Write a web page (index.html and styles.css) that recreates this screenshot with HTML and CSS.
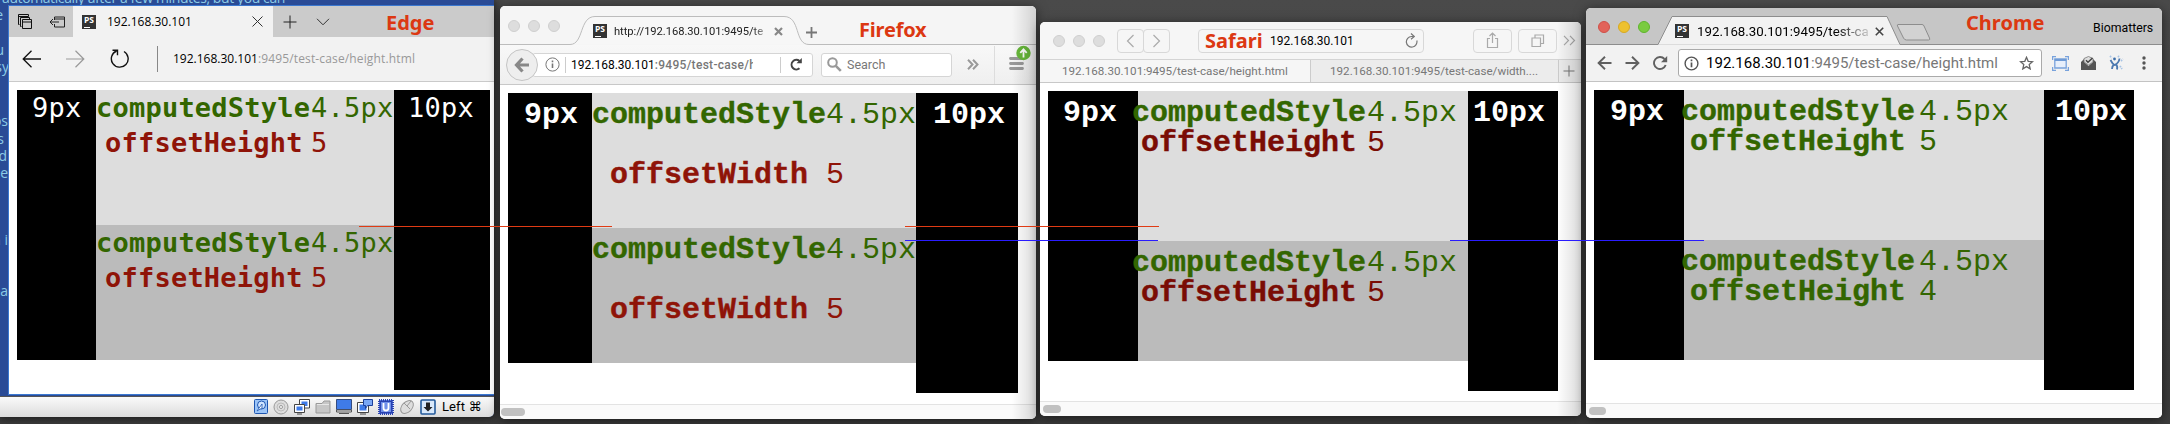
FILE: index.html
```html
<!DOCTYPE html>
<html lang="en">
<head>
<meta charset="utf-8">
<title>Height test case</title>
<link rel="stylesheet" href="styles.css">
</head>
<body>
<main class="desktop">

<section class="vm">
  <div class="wall">
    <span class="wall-top">automatically after a few minutes, but you can</span>
    <span class="frag f1">e</span><span class="frag f2">u</span><span class="frag f3">sy</span><span class="frag f4">os</span><span class="frag f5">s</span><span class="frag f6">d</span><span class="frag f7">e</span><span class="frag f8">n i</span><span class="frag f9">-a</span>
  </div>
  <div class="edge">
    <div class="edge-tabs">
      <div class="edge-left">
        <svg class="e-stack" width="16" height="16" viewBox="0 0 16 16" fill="none" stroke="#111"><path d="M1.5 10.5h-1v-10h10v2M.5 2.5h10M3.500 12.500h-1v-9h9v1.500"/><path d="M4.500 5.500h9v9h-9zM4.500 8h9"/></svg>
        <svg class="e-aside" width="17" height="12" viewBox="0 0 17 12" fill="none" stroke="#222"><path d="M5.500 4V1h10v10h-10V8M5.500 3h10M1 6h9M4 3 1 6l3 3"/></svg>
      </div>
      <div class="edge-tab">
        <span class="fav">PS</span><span class="edge-title">192.168.30.101</span>
        <svg class="e-x" width="11" height="11" viewBox="0 0 11 11" stroke="#333"><path d="M.5.5l10 10M10.500.5l-10 10"/></svg>
      </div>
      <svg class="e-plus" width="14" height="14" viewBox="0 0 14 14" stroke="#222"><path d="M7 .5v13M.5 7h13"/></svg>
      <svg class="e-chev" width="14" height="8" viewBox="0 0 14 8" fill="none" stroke="#333"><path d="M1 .8l6 6 6-6"/></svg>
      <span class="label l-edge">Edge</span>
    </div>
    <div class="edge-bar">
      <svg width="20" height="18" viewBox="0 0 20 18" fill="none" stroke="#111" stroke-width="1.300"><path d="M19 9H1M9.500.8 1.200 9l8.300 8.200"/></svg>
      <svg class="e-fwd" width="20" height="18" viewBox="0 0 20 18" fill="none" stroke="#999" stroke-width="1.200"><path d="M1 9h18M10.500.8 18.800 9l-8.300 8.200"/></svg>
      <svg class="e-rel" width="20" height="20" viewBox="0 0 20 20" fill="none" stroke="#111" stroke-width="1.400"><path d="M14 2.500A8.400 8.400 0 1 1 6.500 2M2.500 1.200h5v5"/></svg>
      <i class="e-sep"></i>
      <span class="e-url">192.168.30.101<em>:9495/test-case/height.html</em></span>
    </div>
    <div class="board b-edge">
      <div class="side s9">9px</div>
      <div class="mid">
        <div class="cell light"><p class="g"><b>computedStyle</b><span>4.5px</span></p><p class="r in"><b>offsetHeight</b><span>5</span></p></div>
        <div class="cell dark"><p class="g"><b>computedStyle</b><span>4.5px</span></p><p class="r in"><b>offsetHeight</b><span>5</span></p></div>
      </div>
      <div class="side s10">10px</div>
    </div>
  </div>
  <div class="status">
    <svg width="14" height="16" viewBox="0 0 14 16"><rect x=".5" y=".5" width="13" height="14" rx="1" fill="#9bc4f7" stroke="#1d55b0"/><circle cx="7.500" cy="6" r="4" fill="#cfe4ff" stroke="#1d55b0"/><path d="M8 5l-5 7 5-3z" fill="#fff" stroke="#1d55b0" stroke-width=".8"/></svg>
    <svg width="16" height="16" viewBox="0 0 16 16" fill="#ddd" stroke="#999"><circle cx="8" cy="8" r="7"/><circle cx="8" cy="8" r="4" stroke="#bbb"/><circle cx="8" cy="8" r="1.500" fill="#fff"/></svg>
    <svg width="16" height="16" viewBox="0 0 16 16" fill="#3f7be8" stroke="#444"><path d="M5.500.500h10v8.500h-10z" fill="#fff"/><path d="M7.500 2.500h6v4.500h-6z" stroke="none"/><path d="M.5 5.500H10.500v8H.5z" fill="#fff"/><path d="M2.500 7.500h6v4h-6z" stroke="none"/><path d="M3 15h5"/></svg>
    <svg width="16" height="16" viewBox="0 0 16 16" fill="#c6c6c6" stroke="#999"><path d="M1 14V4.500h6l2-2.500h6V14z"/><path d="M2 5.500h12" stroke="#e6e6e6"/></svg>
    <svg width="16" height="16" viewBox="0 0 16 16"><path d="M.5.5h15v10H.5z" fill="#3f7be8" stroke="#334b80"/><path d="M.5 11h15v2H.5zM3 14.500h10" fill="#eee" stroke="#555"/></svg>
    <svg width="16" height="16" viewBox="0 0 16 16"><path d="M.5 3.500h11v10H.5z" fill="#fff" stroke="#444"/><path d="M2.500 5.500h7v6h-7z" fill="#3f7be8"/><path d="M3 15h6" stroke="#444"/><path d="M6.500.5h9v6h-5l-2 3v-3h-2z" fill="#79a7f5" stroke="#1b3f9c"/></svg>
    <svg width="16" height="16" viewBox="0 0 16 16"><rect x="1" y="1" width="14" height="14" fill="#5878dc" stroke="#2a42b0" stroke-width="2" stroke-dasharray="1 1"/><rect x="2.500" y="2.500" width="11" height="11" fill="#7090ea" stroke="#2a42b0"/><path d="M5.500 4v5q0 2.500 2.500 2.500T10.500 9V4" fill="none" stroke="#fff" stroke-width="1.800"/></svg>
    <svg width="16" height="16" viewBox="0 0 16 16" fill="#ddd" stroke="#999"><ellipse cx="8" cy="8" rx="5" ry="7.500" transform="rotate(45 8 8)"/><path d="M5 4l6 6M8 7l4-5" fill="none"/></svg>
    <svg width="16" height="16" viewBox="0 0 16 16"><rect x="1" y="1" width="14" height="14" rx="1" fill="#d9e9fb" stroke="#235a9c" stroke-width="1.600"/><path d="M6 3.500h4V8h2.500L8 12.500 3.500 8H6z" fill="#222"/></svg>
    <span class="host">Left ⌘</span>
  </div>
</section>

<section class="win firefox">
  <div class="ff-tabs">
    <svg class="ff-shape" width="536" height="39" viewBox="0 0 536 39"><path d="M0 38.500H70C84 38.500 79 10.500 95 10.500H284C301 10.500 294 38.500 309 38.500H536" fill="#f7f7f7" stroke="#bcbcbc"/></svg>
    <span class="dots"><i></i><i></i><i></i></span>
    <span class="fav">PS</span><span class="ff-title">http://192.168.30.101:9495/te</span>
    <svg class="ff-x" width="9" height="9" viewBox="0 0 9 9" stroke="#888" stroke-width="2.200"><path d="M1 1l7 7M8 1 1 8"/></svg>
    <svg class="ff-plus" width="11" height="11" viewBox="0 0 11 11" stroke="#777" stroke-width="1.800"><path d="M5.500 0v11M0 5.500h11"/></svg>
    <span class="label l-ff">Firefox</span>
  </div>
  <div class="ff-bar">
    <span class="ff-back"><svg width="16" height="16" viewBox="0 0 16 16" fill="none" stroke="#888" stroke-width="3.200"><path d="M15 8H3M8.500 1.500 2.500 8l6 6.500"/></svg></span>
    <div class="ff-url">
      <svg width="15" height="15" viewBox="0 0 15 15" fill="none" stroke="#777"><circle cx="7.500" cy="7.500" r="6.600"/><path d="M7.500 6.500V11M7.500 3.600v1.600" stroke-width="1.600"/></svg>
      <i class="v"></i><span class="u">192.168.30.101<em>:9495/test-case/height.html</em></span><i class="v"></i>
      <svg class="ff-rel" width="13" height="13" viewBox="0 0 13 13" fill="none" stroke="#444" stroke-width="2"><path d="M9.500 10.300A4.800 4.800 0 1 1 9.500 3"/><path d="M6.500 5.200h5.300V0z" fill="#444" stroke="none"/></svg>
    </div>
    <div class="ff-search"><svg width="15" height="15" viewBox="0 0 15 15" fill="none" stroke="#999" stroke-width="2"><circle cx="5.500" cy="5.500" r="4.300"/><path d="M8.800 8.800l5 5" stroke-width="2.600"/></svg>Search</div>
    <svg class="ff-more" width="12" height="11" viewBox="0 0 12 11" fill="none" stroke="#999" stroke-width="2"><path d="M1 .8l4.500 4.700L1 10.200M6 .8l4.500 4.700L6 10.200"/></svg>
    <i class="ff-v"></i>
    <svg class="ff-menu" width="24" height="26" viewBox="0 0 24 26"><path d="M2.500 13.500h12M2.500 18.500h12M2.500 23.500h12" stroke="#999" stroke-width="2.800" stroke-linecap="round"/><circle cx="15.500" cy="8" r="7.200" fill="#67b83a"/><path d="M15.500 12.500V5M12.300 7.800l3.200-3.500 3.200 3.500" fill="none" stroke="#fff" stroke-width="1.800"/></svg>
  </div>
  <div class="board b-ff">
    <div class="side s9">9px</div>
    <div class="mid">
      <div class="cell light"><p class="g"><b>computedStyle</b><span>4.5px</span></p><p class="r in"><b>offsetWidth</b><span>5</span></p></div>
      <div class="cell dark"><p class="g"><b>computedStyle</b><span>4.5px</span></p><p class="r in"><b>offsetWidth</b><span>5</span></p></div>
    </div>
    <div class="side s10">10px</div>
  </div>
  <div class="scroll"><i></i></div>
  <div class="shade"></div>
</section>

<section class="win safari">
  <div class="sf-bar">
    <span class="dots"><i></i><i></i><i></i></span>
    <span class="sf-nav"><i><svg width="9" height="14" viewBox="0 0 9 14"><path d="M7.500 1 1.500 7l6 6"/></svg></i><i><svg width="9" height="14" viewBox="0 0 9 14"><path d="M1.500 1l6 6-6 6"/></svg></i></span>
    <div class="sf-url"><span class="label l-sf">Safari</span><span class="sf-host">192.168.30.101</span><svg width="13" height="15" viewBox="0 0 13 15" fill="none" stroke="#777" stroke-width="1.200"><path d="M11.800 7.500A5.300 5.300 0 1 1 6.500 3.500h2"/><path d="M6 .5l3.300 3L6 6.300" /></svg></div>
    <span class="sf-btn"><svg width="14" height="17" viewBox="0 0 14 17"><path d="M4 6.500H1.500v9h10v-9H9M6.500 11V1M3.500 4l3-3 3 3"/></svg></span>
    <span class="sf-btn b2"><svg width="14" height="14" viewBox="0 0 14 14"><path d="M1 4h8.500v8.500H1zM4 3.800V1h8.500v8.500H10"/></svg></span>
    <svg class="sf-more" width="13" height="11" viewBox="0 0 13 11"><path d="M1 .8l4.500 4.700L1 10.200M7 .8l4.500 4.700L7 10.200"/></svg>
  </div>
  <div class="sf-tabs"><span class="t1">192.168.30.101:9495/test-case/height.html</span><span class="t2">192.168.30.101:9495/test-case/width....</span><span class="t3"><svg width="12" height="12" viewBox="0 0 12 12" stroke="#777"><path d="M6 .5v11M.5 6h11"/></svg></span></div>
  <div class="board b-sf">
    <div class="side s9">9px</div>
    <div class="mid">
      <div class="cell light"><p class="g"><b>computedStyle</b><span>4.5px</span></p><p class="r in"><b>offsetHeight</b><span>5</span></p></div>
      <div class="cell dark"><p class="g"><b>computedStyle</b><span>4.5px</span></p><p class="r in"><b>offsetHeight</b><span>5</span></p></div>
    </div>
    <div class="side s10">10px</div>
  </div>
  <div class="scroll"><i></i></div>
  <div class="shade"></div>
</section>

<section class="win chrome">
  <div class="ch-tabs">
    <svg class="ff-shape" width="576" height="37" viewBox="0 0 576 37"><path d="M0 36.500H72L86 8.500H301L314 36.500H576" fill="#f2f2f2" stroke="#8d8d8d"/><path d="M312 16.500h24q1.500 0 2 1.500l5.500 12q1 2-1 2h-22q-2 0-3-2l-6-12q-.5-1.500.5-1.500z" fill="#d2d2d2" stroke="#8d8d8d"/></svg>
    <span class="dots"><i></i><i></i><i></i></span>
    <span class="fav">PS</span><span class="ch-title">192.168.30.101:9495/test-ca</span>
    <svg class="ch-x" width="9" height="9" viewBox="0 0 9 9" stroke="#444" stroke-width="1.600"><path d="M.8.8l7.400 7.400M8.200.8.8 8.200"/></svg>
    <span class="label l-ch">Chrome</span><span class="ch-user">Biomatters</span>
  </div>
  <div class="ch-bar">
    <svg class="i1" width="15" height="14" viewBox="0 0 15 14" fill="none" stroke="#606060" stroke-width="1.900"><path d="M14.500 7H2M8 .8 1.600 7 8 13.200"/></svg>
    <svg class="i2" width="15" height="14" viewBox="0 0 15 14" fill="none" stroke="#606060" stroke-width="1.900"><path d="M.5 7H13M7 .8 13.400 7 7 13.200"/></svg>
    <svg class="i3" width="15" height="14" viewBox="0 0 15 14" fill="none" stroke="#606060" stroke-width="1.900"><path d="M12.700 9A6 6 0 1 1 11.500 3"/><path d="M8 6.300h6.200V0z" fill="#606060" stroke="none"/></svg>
    <div class="ch-url">
      <svg width="15" height="15" viewBox="0 0 15 15" fill="none" stroke="#555" stroke-width="1.400"><circle cx="7.500" cy="7.500" r="6.400"/><path d="M7.500 6.500v4.700M7.500 3.600v1.700" stroke-width="1.700"/></svg>
      <span>192.168.30.101<em>:9495/test-case/height.html</em></span>
      <svg width="15" height="14" viewBox="0 0 15 14" fill="none" stroke="#666" stroke-width="1.300"><path d="M7.500 1.300l1.700 4 4.300.4-3.300 2.900 1 4.300-3.700-2.300-3.700 2.300 1-4.300L1.500 5.700l4.300-.4z"/></svg>
    </div>
    <svg class="x1" width="17" height="15" viewBox="0 0 17 15" fill="none" stroke="#78a2dc" stroke-width="1.300"><path d="M.6 4V.6H4M13 .6h3.400V4M.6 11v3.400H4M16.400 11v3.400H13"/><path d="M2.800 3h11.400v9H2.800z" fill="#e7effb"/><path d="M2.800 4h11.400" stroke="#6f9bd6" stroke-width="2"/></svg>
    <svg class="x2" width="15" height="15" viewBox="0 0 15 15" fill="#555"><path d="M0 6l3-3v3l4.500 4L12 6V3l3 3v8H0z"/><path d="M3 6V2.500L7.500.5 12 2.500V6L7.500 9z" fill="#ddd" stroke="#777" stroke-width=".8"/><path d="M5 4.300l2 2L11.500 2" fill="none" stroke="#444" stroke-width="1.500"/></svg>
    <svg class="x3" width="16" height="16" viewBox="0 0 16 16" fill="none" stroke="#4c79b0" stroke-width="1.800"><path d="M2.500 5q2 4 4 5Q11 8 11.500 3.500M6.500 9Q4 11 4 14M7.500 9q2.500 2 1.500 5.500"/><circle cx="6.500" cy="4" r="1.400" fill="#3c6eaa" stroke="none"/><path d="M2 1l2 2M10 1l1 1M13 6l2-2M12 11l2 3" stroke="#a7c3e4" stroke-dasharray="1.500 1"/></svg>
    <svg class="x4" width="4" height="14" viewBox="0 0 4 14" fill="#555"><circle cx="2" cy="2" r="1.700"/><circle cx="2" cy="7" r="1.700"/><circle cx="2" cy="12" r="1.700"/></svg>
  </div>
  <div class="board b-ch">
    <div class="side s9">9px</div>
    <div class="mid">
      <div class="cell light"><p class="g"><b>computedStyle</b><span>4.5px</span></p><p class="g in"><b>offsetHeight</b><span>5</span></p></div>
      <div class="cell dark"><p class="g"><b>computedStyle</b><span>4.5px</span></p><p class="g in"><b>offsetHeight</b><span>4</span></p></div>
    </div>
    <div class="side s10">10px</div>
  </div>
  <div class="scroll"><i></i></div>
</section>

<i class="rule red r1"></i><i class="rule red r2"></i><i class="rule blue r3"></i><i class="rule blue r4"></i>
</main>
</body>
</html>
```

FILE: styles.css
```css
* { box-sizing: border-box; }
body { margin: 0; }
p { margin: 0; }
em, i { font-style: normal; }
svg { display: block; flex: none; }
.desktop { position: relative; width: 2170px; height: 424px; overflow: hidden; background: linear-gradient(#4a4a4a, #3b3b3b); font-family: Roboto, sans-serif; }
.label { font: bold 20px/24px "Noto Sans", sans-serif; color: #dc3812; white-space: nowrap; }
.fav { width: 14px; height: 14px; flex: none; background: #333; color: #fff; font: bold 8.5px/9px "Open Sans", sans-serif; text-align: center; background-image: linear-gradient(#fff, #fff); background-size: 6px 1px; background-position: 2px 12px; background-repeat: no-repeat; }

/* virtual machine window */
.vm { position: absolute; left: 0; top: 0; width: 494px; height: 417px; overflow: hidden; border-radius: 0 0 5px 0; background: #2a4b96; box-shadow: 0 0 10px #111; display: flex; flex-direction: column; }
.wall { position: absolute; inset: 0; color: #8ccbe6; font: 14px/18px "Open Sans", sans-serif; }
.wall-top { position: absolute; left: 2px; top: -11px; white-space: nowrap; letter-spacing: -.4px; }
.frag { position: absolute; right: 486px; white-space: nowrap; }
.f1 { right: 491px; top: 6px; } .f2 { right: 490px; top: 41px; } .f3 { right: 485px; top: 58px; } .f4 { right: 486px; top: 112px; } .f5 { right: 490px; top: 130px; } .f6 { right: 487px; top: 147px; } .f7 { right: 486px; top: 164px; } .f8 { top: 231px; } .f9 { right: 486px; top: 282px; }
.edge { position: relative; margin: 5px 0 0 8px; height: 390px; border: 1px solid #3b78d0; border-right: 0; background: #fff; flex: none; }
.edge-tabs { display: flex; height: 31px; background: #cbcbcb; align-items: center; }
.edge-left { display: flex; width: 64px; padding-left: 9px; align-items: center; }
.e-aside { margin-left: 15px; }
.edge-tab { display: flex; align-items: center; width: 200px; height: 31px; background: #f2f2f2; padding-left: 9px; }
.edge-title { width: 145px; margin-left: 11px; font: 12px/16px "Open Sans", sans-serif; }
.e-plus { margin-left: 10px; } .e-chev { margin-left: 19px; }
.l-edge { margin: 2px 0 0 56px; }
.edge-bar { display: flex; align-items: center; height: 45px; background: #f2f2f2; border-bottom: 1px solid #cacaca; padding-left: 13px; }
.e-fwd { margin-left: 23px; } .e-rel { margin-left: 25px; }
.e-sep { width: 1px; height: 26px; background: #888; margin: 0 15px 0 27px; }
.e-url { font: 12px/16px "Open Sans", sans-serif; white-space: nowrap; }
.e-url em { color: #999; letter-spacing: .14px; }
.status { position: relative; margin-top: 1px; height: 21px; border-top: 1px solid #555; background: linear-gradient(#fafafa, #dcdcdc); padding-left: 254px; display: flex; gap: 5px; align-items: center; }
.host { font: 13px/18px Roboto, "DejaVu Sans", sans-serif; margin-left: 1px; white-space: nowrap; letter-spacing: .1px; }

/* test boards */
.board { display: flex; align-items: flex-start; font: 30px/30px "Liberation Mono", monospace; white-space: nowrap; }
.side { background: #000; color: #fff; font-weight: bold; flex: none; height: 270px; position: relative; z-index: 0; }
.s10 { height: 300px; }
.mid { flex: none; position: relative; z-index: 1; }
.cell p { display: flex; }
.cell b { flex: none; -webkit-text-stroke: .4px currentColor; }
.light { background: #ddd; } .dark { background: #bbb; }
.g { color: #360; } .r { color: #8f1408; }
.b-edge { padding: 8px 0 0 8px; font: 27px/35px "DejaVu Sans Mono", monospace; letter-spacing: .22px; }
.b-edge .side { font-weight: normal; }
.b-edge b { -webkit-text-stroke: 0; }
.b-edge .s9 { width: 79px; padding-left: 15px; } .b-edge .s10 { width: 96px; padding-left: 14px; }
.b-edge .mid { width: 298px; } .b-edge .cell { height: 135px; }
.b-edge b { width: 215px; } .b-edge .in b { width: 206px; margin-left: 9px; }
.b-ff { padding: 8px 0 0 8px; }
.b-ff .side { padding-top: 7px; }
.b-ff .s9 { width: 84px; padding-left: 16px; } .b-ff .s10 { width: 102px; padding-left: 17px; }
.b-ff .mid { width: 324px; } .b-ff .cell { height: 135px; padding-top: 7px; }
.b-ff b { width: 234px; } .b-ff .in { margin-top: 30px; } .b-ff .in b { width: 216px; margin-left: 18px; }
.b-sf { padding: 8px 0 0 8px; }
.b-sf .side { padding-top: 7px; }
.b-sf .s9 { width: 90px; padding-left: 15px; } .b-sf .s10 { width: 90px; padding-left: 5px; }
.b-sf .mid { width: 330px; } .b-sf .light { height: 150px; padding-top: 7px; } .b-sf .dark { height: 120px; padding-top: 7px; }
.b-sf b { width: 235px; margin-left: -6px; } .b-sf .in b { width: 226px; margin-left: 3px; }
.b-sf .r { color: #7a0c04; }
.b-ch { padding: 8px 0 0 8px; }
.b-ch .side { padding-top: 7px; }
.b-ch .s9 { width: 90px; padding-left: 16px; } .b-ch .s10 { width: 90px; padding-left: 11px; }
.b-ch .mid { width: 360px; } .b-ch .light { height: 150px; padding-top: 7px; } .b-ch .dark { height: 120px; padding-top: 7px; }
.b-ch b { width: 238px; margin-left: -3px; } .b-ch .in b { width: 229px; margin-left: 6px; }

/* desktop windows */
.win { position: absolute; background: #fff; border-radius: 5px; overflow: hidden; box-shadow: 0 2px 12px rgba(0,0,0,.55); display: flex; flex-direction: column; }
.dots { display: flex; gap: 8px; flex: none; }
.dots i { width: 12px; height: 12px; border-radius: 50%; background: #ddd; border: 1px solid #cfcfcf; }
.scroll { margin-top: auto; border-top: 1px solid #e3e3e3; background: #fafafa; height: 15px; padding: 3px 0 0 1px; flex: none; }
.scroll i { display: block; width: 24px; height: 8px; border-radius: 4px; background: #c1c1c1; }
.shade { position: absolute; right: 0; top: 0; bottom: 0; width: 24px; background: linear-gradient(90deg, transparent, rgba(0,0,0,.14)); }
.ff-shape { position: absolute; left: 0; top: 0; }

.firefox { left: 500px; top: 6px; width: 536px; height: 413px; }
.ff-tabs { position: relative; height: 39px; background: #f5f5f5; display: flex; align-items: center; padding-left: 8px; flex: none; }
.ff-tabs > * { flex: none; }
.ff-tabs > :not(.ff-shape) { position: relative; }
.ff-tabs .fav { margin: 11px 0 0 33px; }
.ff-title { width: 153px; margin: 11px 0 0 7px; overflow: hidden; white-space: nowrap; font-size: 11.2px; line-height: 15px; letter-spacing: -.05px; color: #222; mask-image: linear-gradient(90deg, #000 90%, rgba(0,0,0,.3)); }
.ff-x { margin: 11px 0 0 7px; } .ff-plus { margin: 13px 0 0 23px; }
.l-ff { margin: 8px 0 0 42px; letter-spacing: -.2px; }
.ff-bar { position: relative; display: flex; align-items: center; height: 40px; background: linear-gradient(#f8f8f8, #efefef); border-bottom: 1px solid #c8c8c8; padding-left: 6px; flex: none; }
.ff-back { width: 32px; height: 32px; border-radius: 50%; border: 1px solid #c4c4c4; background: #eee; display: grid; place-items: center; position: relative; z-index: 1; flex: none; }
.ff-url { display: flex; align-items: center; width: 281px; height: 24px; margin-left: -6px; padding-left: 12px; background: #fff; border: 1px solid #d5d5d5; border-radius: 3px; flex: none; }
.v { width: 1px; height: 16px; background: #ccc; margin: 0 5px; flex: none; }
.ff-url .u { width: 182px; margin-right: 27px; overflow: hidden; white-space: nowrap; font-size: 12px; line-height: 16px; }
.ff-url .u em { color: #777; font-weight: 500; letter-spacing: .3px; }
.ff-url .u + .v { margin: 0 9px 0 0; }
.ff-search { display: flex; align-items: center; gap: 5px; width: 131px; height: 24px; margin-left: 8px; padding-left: 5px; background: #fff; border: 1px solid #d5d5d5; border-radius: 3px; font-size: 12.500px; color: #777; flex: none; }
.ff-more { margin-left: 15px; } .ff-v { width: 1px; height: 38px; margin-left: 15px; background: #ddd; }
.ff-menu { margin: -14px 0 0 13px; }

.safari { left: 1040px; top: 22px; width: 541px; height: 394px; }
.sf-bar { display: flex; align-items: center; height: 38px; background: #f6f6f6; border-bottom: 1px solid #d4d4d4; padding-left: 13px; flex: none; }
.sf-bar svg { fill: none; stroke: #aaa; stroke-width: 1.2px; }
.sf-nav { display: flex; margin-left: 12px; }
.sf-nav i { width: 27px; height: 24px; border: 1px solid #d8d8d8; border-radius: 4px; display: grid; place-items: center; }
.sf-nav i + i { margin-left: -1px; }
.sf-url { width: 226px; height: 24px; margin-left: 28px; border: 1px solid #d8d8d8; border-radius: 4px; display: flex; align-items: center; padding-left: 6px; flex: none; }
.l-sf { width: 65px; } .sf-host { width: 135px; font-size: 12px; }
.sf-bar .sf-url svg { stroke: #777; }
.sf-btn { width: 39px; height: 24px; border: 1px solid #d8d8d8; border-radius: 4px; display: grid; place-items: center; margin-left: 49px; flex: none; }
.b2 { margin-left: 6px; } .sf-more { margin-left: 6px; }
.sf-tabs { display: flex; height: 23px; border-bottom: 1px solid #c8c8c8; color: #777; font-size: 11.650px; line-height: 23px; background: #ececec; flex: none; white-space: nowrap; }
.t1 { width: 271px; padding-left: 22px; background: #f6f6f6; border-right: 1px solid #ccc; }
.t2 { width: 248px; padding-left: 19px; border-right: 1px solid #ccc; }
.t3 { padding: 5px 0 0 4px; }
.safari .scroll { padding-left: 3px; } .safari .scroll i { width: 18px; }

.chrome { left: 1586px; top: 8px; width: 576px; height: 410px; }
.ch-tabs { position: relative; height: 37px; background: #c6c6c6; display: flex; align-items: center; padding-left: 12px; flex: none; }
.ch-tabs > * { flex: none; }
.ch-tabs > :not(.ff-shape) { position: relative; }
.chrome .dots i:nth-child(1) { background: #e2635a; border-color: #cf5048; }
.chrome .dots i:nth-child(2) { background: #edc12f; border-color: #d7a922; }
.chrome .dots i:nth-child(3) { background: #7acb40; border-color: #5fb52c; }
.ch-tabs .fav { margin: 9px 0 0 25px; }
.ch-title { width: 173px; margin: 9px 0 0 8px; overflow: hidden; white-space: nowrap; font-size: 13.3px; line-height: 17px; mask-image: linear-gradient(90deg, #000 80%, transparent 103%); }
.ch-x { margin: 9px 0 0 5px; }
.l-ch { width: 125px; margin: -8px 0 0 82px; }
.ch-user { font-size: 12.3px; line-height: 16px; margin: 3px 0 0 2px; }
.ch-bar { display: flex; align-items: center; height: 37px; background: #f2f2f2; border-bottom: 1px solid #c3c3c3; padding-left: 11px; flex: none; }
.i2 { margin-left: 13px; } .i3 { margin-left: 13px; }
.ch-url { display: flex; align-items: center; width: 364px; height: 28px; margin-left: 10px; padding-left: 5px; background: #fff; border: 1px solid #aaa; border-radius: 3px; flex: none; }
.ch-url span { width: 313px; margin-left: 7px; font-size: 15px; letter-spacing: .02px; white-space: nowrap; }
.ch-url em { color: #777; }
.x1 { margin-left: 10px; } .x2 { margin-left: 12px; } .x3 { margin-left: 12px; } .x4 { margin-left: 18px; }
.chrome .scroll { padding-left: 3px; } .chrome .scroll i { width: 17px; }

/* guide lines across the windows */
.rule { position: absolute; height: 1px; z-index: 5; }
.red { background: #e03b14; top: 226px; } .blue { background: #2a1cff; top: 240px; }
.r1 { left: 359px; width: 253px; } .r2 { left: 905px; width: 254px; }
.r3 { left: 905px; width: 253px; } .r4 { left: 1450px; width: 254px; }
```
